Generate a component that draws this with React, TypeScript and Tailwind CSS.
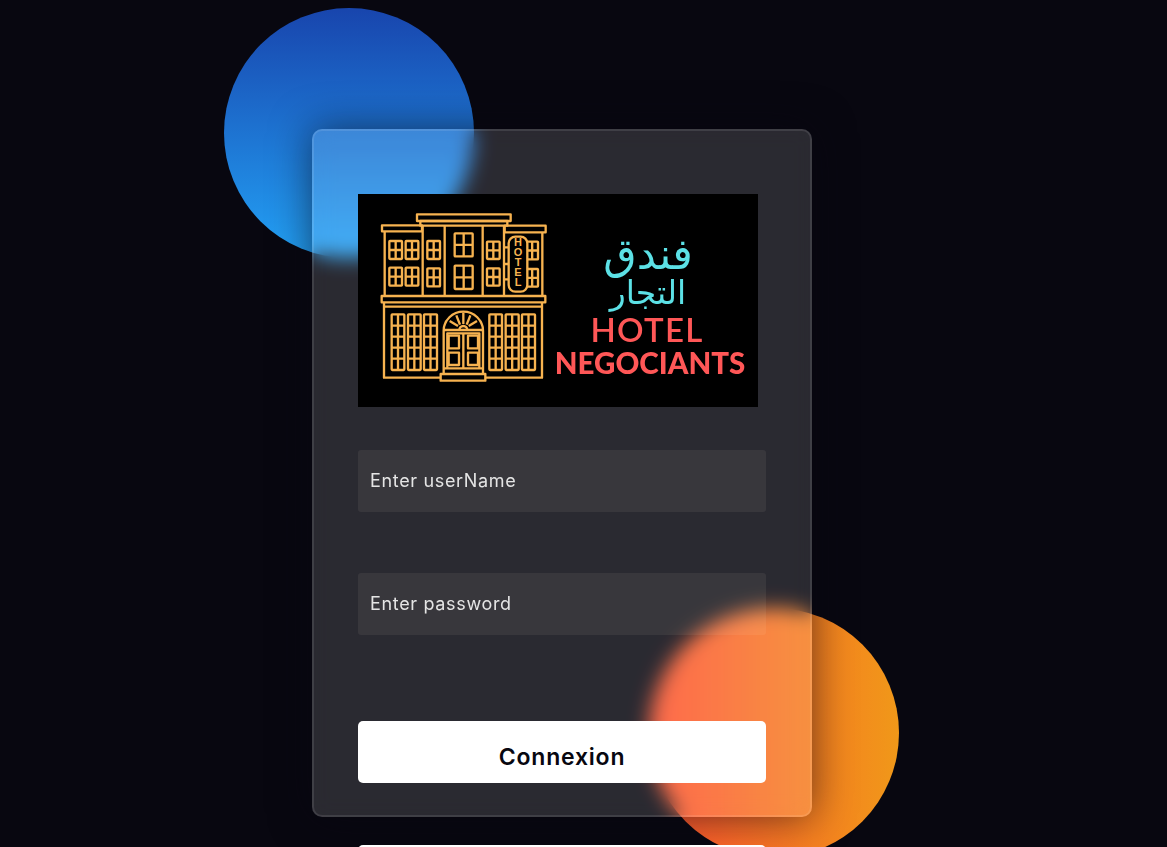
const smallWindows = [
  [94, 153, 132, 207], [143, 153, 181, 207], [94, 233, 132, 287], [143, 233, 181, 287],
  [208, 153, 246, 207], [208, 235, 246, 289], [387, 155, 425, 207], [387, 235, 425, 287],
  [505, 155, 540, 208], [505, 237, 540, 290], [290, 130, 344, 199], [290, 227, 344, 297],
]

const tallWindows = [
  [101, 373, 139, 540], [150, 373, 188, 540], [198, 373, 237, 540],
  [394, 373, 432, 540], [443, 373, 482, 540], [492, 373, 531, 540],
]

const doorPanels = [
  [272, 437, 303, 475], [330, 437, 360, 475], [272, 488, 303, 525], [330, 488, 360, 525],
]

const rays = [
  [300, 408, 275, 393], [306, 404, 295, 376], [316, 402, 316, 368], [326, 404, 337, 376], [332, 408, 357, 393],
]

const signLetters = [
  ['H', 169], ['O', 199], ['T', 228], ['E', 258], ['L', 289],
] as const

function HotelBuilding() {
  return (
    <svg width="196" height="213" viewBox="0 12 588 639" fill="none" stroke="#f7b350" strokeWidth="7" strokeLinejoin="round" className="shrink-0">
      {/* roof */}
      <rect x="177" y="73" width="281" height="20" />
      <rect x="187" y="93" width="261" height="14" />
      <rect x="72" y="106" width="120" height="18" />
      <rect x="440" y="107" width="123" height="20" />
      {/* upper floors */}
      <path d="M80 124V318M553 127V318M194 107V318M260 107V318M374 107V318M438 107V318" />
      {smallWindows.map(([x1, y1, x2, y2]) => (
        <g key={`${x1}-${y1}`}>
          <rect x={x1} y={y1} width={x2 - x1} height={y2 - y1} rx="2" />
          <path d={`M${(x1 + x2) / 2} ${y1}V${y2}M${x1} ${(y1 + y2) / 2}H${x2}`} />
        </g>
      ))}
      {/* sign */}
      <rect x="452" y="140" width="56" height="165" rx="20" fill="#000" />
      <path d="M440 172H452M440 222H452M440 268H452" />
      {signLetters.map(([letter, y]) => (
        <text key={letter} x="480" y={y} textAnchor="middle" fontSize="33" fontFamily="'Liberation Sans', sans-serif" fontWeight="700" fill="#f7b350" stroke="none">
          {letter}
        </text>
      ))}
      {/* ground floor */}
      <rect x="71" y="318" width="491" height="19" />
      <path d="M80 350H552M78 337V563H248M552 337V563H382" />
      {tallWindows.map(([x1, y1, x2, y2]) => (
        <g key={x1}>
          <rect x={x1} y={y1} width={x2 - x1} height={y2 - y1} rx="2" />
          <path d={`M${(x1 + x2) / 2} ${y1}V${y2}M${x1} 407H${x2}M${x1} 440H${x2}M${x1} 473H${x2}M${x1} 506H${x2}`} />
        </g>
      ))}
      {/* door */}
      <path d="M257 552V422A59 57 0 0 1 375 422V552" />
      <path d="M257 420H375M304 420A12 12 0 0 1 328 420" />
      {rays.map(([x1, y1, x2, y2]) => (
        <line key={`${x2}-${y2}`} x1={x1} y1={y1} x2={x2} y2={y2} />
      ))}
      <path d="M268 535V430H364V535M316 430V535" />
      {doorPanels.map(([x1, y1, x2, y2]) => (
        <rect key={`${x1}-${y1}`} x={x1} y={y1} width={x2 - x1} height={y2 - y1} />
      ))}
      <path d="M257 535H375" />
      <rect x="248" y="552" width="134" height="20" />
    </svg>
  )
}

function Logo() {
  return (
    <div className="flex h-[213px] w-[400px] shrink-0 bg-black">
      <HotelBuilding />
      <div className="flex w-[192px] flex-col items-center pt-[40px]">
        <div dir="rtl" className="h-[40px] pr-[4px] font-['DejaVu_Sans',sans-serif] text-[43px] leading-[40px] text-[#5ce1e6]">فندق</div>
        <div dir="rtl" className="h-[38px] pr-[4px] font-['DejaVu_Sans',sans-serif] text-[33px] leading-[38px] text-[#5ce1e6]">التجار</div>
        <div className="h-[34px] pr-[6px] font-['Lato',sans-serif] text-[33px] font-semibold leading-[34px] tracking-[1.3px] text-[#ff5757]">HOTEL</div>
        <div className="whitespace-nowrap font-['Lato',sans-serif] text-[29.5px] font-black leading-[34px] text-[#ff5757]">NEGOCIANTS</div>
      </div>
    </div>
  )
}

export default function App() {
  return (
    <div className="relative h-[847px] w-full overflow-hidden bg-[#080710] pl-[312px] pt-[129px]">
      <div className="absolute left-[224px] top-[8px] size-[250px] rounded-full bg-[linear-gradient(#1845ad,#23a2f6)]" />
      <div className="absolute left-[649px] top-[608px] size-[250px] rounded-full bg-[linear-gradient(to_right,#ff512f,#f09819)]" />

      <form className="relative flex h-[688px] w-[500px] flex-col rounded-[10px] border-2 border-white/10 bg-[rgba(255,255,255,0.14)] pl-[44px] pt-[63px] font-['Inter',sans-serif] shadow-[0_0_40px_rgba(8,7,16,0.6)] backdrop-blur-[10px]">
        <Logo />
        <input
          type="text"
          placeholder="Enter userName"
          className="mt-[43px] h-[62px] w-[408px] shrink-0 rounded-[3px] bg-[rgba(255,255,225,0.065)] px-[12px] pb-[2px] text-[18px] font-normal tracking-[0.66px] text-white outline-none placeholder:text-[#e5e5e5]"
        />
        <input
          type="password"
          placeholder="Enter password"
          className="mt-[61px] h-[62px] w-[408px] shrink-0 rounded-[3px] bg-[rgba(255,255,225,0.065)] px-[12px] pb-[2px] text-[18px] font-normal tracking-[0.66px] text-white outline-none placeholder:text-[#e5e5e5]"
        />
        <button type="button" className="mt-[86px] h-[62px] w-[408px] shrink-0 rounded-[5px] bg-white pt-[10px] text-[23px] font-semibold tracking-[0.8px] text-[#080710]">
          Connexion
        </button>
        <button type="button" className="mt-[62px] h-[62px] w-[408px] shrink-0 rounded-[5px] bg-white" />
      </form>
    </div>
  )
}
